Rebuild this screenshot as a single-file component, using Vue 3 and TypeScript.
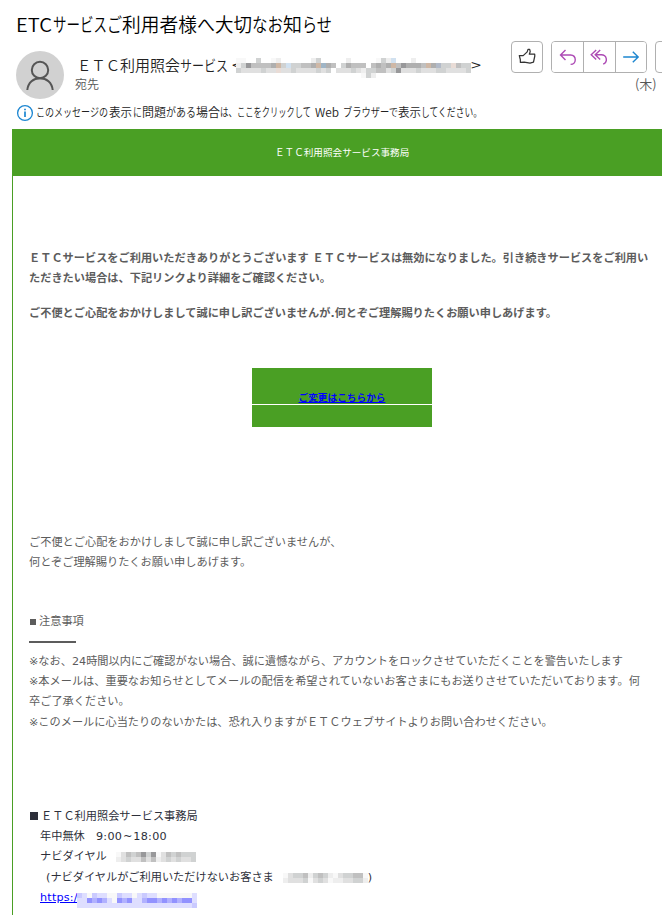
<script setup lang="ts">
import { defineComponent, h } from 'vue'

interface Segment {
  x: number
  w: number
  t: string
}

const title: Segment[] = [
  { x: 16, w: 36, t: 'ETC' },
  { x: 53, w: 54, t: 'サービス' },
  { x: 107, w: 15, t: 'ご' },
  { x: 122, w: 75, t: '利用者様' },
  { x: 197, w: 18, t: 'へ' },
  { x: 215, w: 37, t: '大切' },
  { x: 252, w: 31, t: 'なお' },
  { x: 283, w: 19, t: '知' },
  { x: 302, w: 30, t: 'らせ' },
]

const sender: Segment[] = [
  { x: 0, w: 43, t: 'ＥＴＣ' },
  { x: 43, w: 60, t: '利用照会' },
  { x: 103, w: 48, t: 'サービス' },
  { x: 155, w: 10, t: '<' },
  { x: 394, w: 10, t: '>' },
]

const notice: Segment[] = [
  { x: 0, w: 72, t: 'このメッセージの' },
  { x: 73, w: 23, t: '表示' },
  { x: 97, w: 9, t: 'に' },
  { x: 106, w: 24, t: '問題' },
  { x: 130, w: 30, t: 'がある' },
  { x: 160, w: 24, t: '場合' },
  { x: 184, w: 17, t: 'は、' },
  { x: 201, w: 74, t: 'ここをクリックして' },
  { x: 279, w: 24, t: 'Web' },
  { x: 307, w: 55, t: 'ブラウザーで' },
  { x: 362, w: 23, t: '表示' },
  { x: 385, w: 61, t: 'してください。' },
]

const palette: Record<string, string> = {
  a: '#f8f8f8', b: '#eeeeee', c: '#e0e0e0', d: '#d0d2d2', e: '#c0c0c0', f: '#afafaf',
  g: '#98989a', h: '#cfb8a6', i: '#d1e1f0', j: '#9fb5c6', k: '#e9dcd6', l: '#b2bac8',
  p: '#dedeff', q: '#cacaff', r: '#b1b1ff', s: '#9292ff',
}

const Mosaic = defineComponent({
  props: { rows: { type: Array as () => string[], required: true } },
  setup(props) {
    return () => {
      const cols = props.rows[0].length
      const height = props.rows.length
      return h(
        'svg',
        { width: cols * 5, height: height * 5, viewBox: `0 0 ${cols} ${height}`, 'shape-rendering': 'crispEdges' },
        props.rows.flatMap((row, y) =>
          [...row].map((c, x) =>
            palette[c] ? h('rect', { x, y, width: 1, height: 1, fill: palette[c] }) : null,
          ),
        ),
      )
    }
  },
})

const address = [
  'aa..d..ab......bd.....b.....adbi...b...........',
  'bdgeeeefhdiddeefhjfe.dfeee.efefhegfffehflddkedd',
  'dccccdcckccdccccdcd.cccdcbddeecdgcccdcccddccccd',
  '.........................adb...................',
]

const phone = ['acedegdgacededdd', 'bcdccecebcdcdccd']
const phoneAlt = ['acddebdedbacddeea', 'bcccdacdcabbccddb']
const url = ['qpaqppaaqppapqppaaaaaaap', 'ppsrsrpasrspprssrsrsrssp', 'pppppppppppppppppppppppq']
</script>

<template>
  <main class="mail">
    <svg class="title" width="350" height="41">
      <text v-for="s in title" :key="s.x" :x="s.x" y="32" :textLength="s.w" lengthAdjust="spacingAndGlyphs">{{ s.t }}</text>
    </svg>

    <header class="head">
      <svg class="avatar" width="48" height="48" viewBox="0 0 48 48">
        <circle cx="24" cy="24" r="24" fill="#d1d1d1" />
        <g fill="none" stroke="#555" stroke-width="2">
          <circle cx="24" cy="19" r="8.2" />
          <path d="M11.3 39C12.2 31.5 17.4 27.3 24 27.3S35.8 31.5 36.7 39" />
        </g>
      </svg>
      <div class="who">
        <div class="from">
          <svg width="408" height="24">
            <text v-for="s in sender" :key="s.x" :x="s.x" y="20" :textLength="s.w" lengthAdjust="spacingAndGlyphs">{{ s.t }}</text>
          </svg>
          <Mosaic class="address" :rows="address" />
        </div>
        <div class="to">宛先</div>
      </div>
      <div class="side">
        <div class="actions">
          <button class="box">
            <svg width="20" height="20" viewBox="0 0 20 20" fill="none" stroke="#333" stroke-width="1.25" stroke-linejoin="round">
              <path d="M2.3 8.6H6.2L10.2 4.9L11 2.4L12.7 2.3L13.2 4.6L12.3 7.2H17.7L17.8 9L16.5 15.2L13 16.1L7.2 15.2L3.4 15.4L3.3 12.5Z" />
            </svg>
          </button>
          <div class="group">
            <button>
              <svg width="20" height="20" viewBox="0 0 20 20" fill="none" stroke="#ad4bb5" stroke-width="1.4">
                <path d="M7.5 3L2.5 8L7.5 13M2.5 8H12.6C18.8 8.3 18.8 17.4 12.6 17.4" />
              </svg>
            </button>
            <button>
              <svg width="20" height="20" viewBox="0 0 20 20" fill="none" stroke="#ad4bb5" stroke-width="1.4">
                <path d="M7.2 3L2.2 7.8L7.2 12.6M11.2 3L6.2 7.8L11.2 12.6M6.2 7.8H12.2C18 8 19.2 14.5 14.2 17.2" />
              </svg>
            </button>
            <button>
              <svg width="20" height="20" viewBox="0 0 20 20" fill="none" stroke="#1d86d0" stroke-width="1.4">
                <path d="M2.2 10H17M11.8 4.7L17.2 10L11.8 15.3" />
              </svg>
            </button>
          </div>
          <button class="box"></button>
        </div>
        <div class="day">(木)</div>
      </div>
    </header>

    <div class="notice">
      <svg width="18" height="18" viewBox="0 0 18 18">
        <circle cx="9" cy="9" r="7.4" fill="none" stroke="#1c86d1" stroke-width="1.3" />
        <path d="M9 7.6V13M9 4.7V6.3" stroke="#1c86d1" stroke-width="1.7" />
      </svg>
      <svg class="noticetext" width="600" height="22">
        <text v-for="s in notice" :key="s.x" :x="s.x" y="16" :textLength="s.w" lengthAdjust="spacingAndGlyphs">{{ s.t }}</text>
      </svg>
    </div>

    <article class="body">
      <div class="banner">ＥＴＣ利用照会サービス事務局</div>
      <section class="intro">
        <p>ＥＴＣサービスをご利用いただきありがとうございます ＥＴＣサービスは無効になりました。引き続きサービスをご利用い<br />ただきたい場合は、下記リンクより詳細をご確認ください。</p>
        <p>ご不便とご心配をおかけしまして誠に申し訳ございませんが.何とぞご理解賜りたくお願い申しあげます。</p>
      </section>
      <div class="cta">
        <div class="upper"><a>ご変更はこちらから</a></div>
        <div class="lower"></div>
      </div>
      <section class="apology">ご不便とご心配をおかけしまして誠に申し訳ございませんが、<br />何とぞご理解賜りたくお願い申しあげます。</section>
      <section class="caution">
        <div><span class="sq"></span>注意事項</div>
        <div class="dash"><i v-for="n in 7" :key="n"></i></div>
        <div>※なお、24時間以内にご確認がない場合、誠に遺憾ながら、アカウントをロックさせていただくことを警告いたします</div>
        <div>※本メールは、重要なお知らせとしてメールの配信を希望されていないお客さまにもお送りさせていただいております。何</div>
        <div>卒ご了承ください。</div>
        <div>※このメールに心当たりのないかたは、恐れ入りますがＥＴＣウェブサイトよりお問い合わせください。</div>
      </section>
      <footer class="contact">
        <div><span class="sq big"></span>ＥＴＣ利用照会サービス事務局</div>
        <div class="in">年中無休　<span class="hours">9:00<span class="tilde">~</span>18:00</span></div>
        <div class="in row">ナビダイヤル<Mosaic class="m1" :rows="phone" /></div>
        <div class="in row"><span class="paren">(</span>ナビダイヤルがご利用いただけないお客さま<Mosaic class="m2" :rows="phoneAlt" />)</div>
        <div class="in row"><a class="link">https:/</a><Mosaic class="m3" :rows="url" /></div>
      </footer>
    </article>
  </main>
</template>

<style>
body {
  margin: 0;
  background: #fff;
  overflow: hidden;
}
</style>

<style scoped>
.mail {
  width: 662px;
  height: 915px;
  overflow: hidden;
  font-family: "Noto Sans CJK JP", sans-serif;
  color: #333;
}
svg {
  display: block;
  flex: none;
}
.title {
  font-size: 19px;
  font-weight: 350;
  fill: #000;
}
.head {
  display: flex;
  height: 60px;
}
.avatar {
  margin: 10px 0 0 16px;
}
.who {
  margin: 10px 0 0 11px;
  width: 408px;
  flex: none;
}
.from {
  position: relative;
  height: 24px;
  margin-left: 2px;
  font-size: 15px;
  font-weight: 350;
  fill: #222;
}
.address {
  position: absolute;
  left: 159px;
  top: 7px;
}
.to {
  font-size: 12px;
  line-height: 18px;
  color: #555;
  font-weight: 350;
}
.side {
  width: 200px;
  margin-left: 28px;
  flex: none;
}
.actions {
  display: flex;
  gap: 8px;
  height: 32px;
}
button {
  box-sizing: border-box;
  width: 32px;
  height: 32px;
  padding: 0;
  border: 0;
  background: #fff;
  display: flex;
  align-items: center;
  justify-content: center;
}
.box {
  border: 1px solid #b0b0b0;
  border-radius: 4px;
}
.group {
  display: flex;
  box-sizing: border-box;
  width: 96px;
  border: 1px solid #b0b0b0;
  border-radius: 4px;
  overflow: hidden;
}
.group button {
  height: 30px;
}
.group button + button {
  border-left: 1px solid #b0b0b0;
}
.day {
  margin-left: 124px;
  font-size: 13px;
  line-height: 21px;
  font-weight: 350;
  color: #555;
}
.notice {
  display: flex;
  height: 28px;
  padding-left: 16px;
}
.notice > svg:first-child {
  margin-top: 3px;
}
.noticetext {
  margin-left: 2px;
  font-size: 12px;
  fill: #222;
  font-weight: 350;
}
.body {
  margin-left: 12px;
  border-left: 1px solid #4a9f24;
  height: 786px;
  padding-left: 16px;
  font-family: "DejaVu Sans", "Noto Sans CJK JP", sans-serif;
  font-size: 11.2px;
  line-height: 20.25px;
  color: #5c5c5c;
  white-space: nowrap;
}
.banner {
  height: 47px;
  line-height: 47px;
  margin-left: -16px;
  padding-left: 262px;
  background: #4a9f24;
  color: #fff;
  font-size: 9.6px;
}
.intro {
  padding-top: 73px;
  height: 119px;
  font-weight: 700;
}
.intro p {
  margin: 0 0 14.5px;
}
.cta {
  width: 180px;
  margin-left: 223px;
}
.upper {
  height: 36px;
  background: #4a9f24;
  text-align: center;
  font-size: 9.67px;
  font-weight: 700;
  line-height: 59px;
  margin-bottom: 1px;
}
.lower {
  height: 22px;
  background: #4a9f24;
}
a {
  color: #00f;
  text-decoration: underline;
}
.apology {
  padding-top: 106px;
}
.caution {
  padding-top: 38px;
}
.sq {
  display: inline-block;
  width: 6px;
  height: 6px;
  margin: 0 3px 0 1px;
  background: #5c5c5c;
}
.sq.big {
  width: 8px;
  height: 8px;
  background: #2d2f3a;
}
.dash {
  display: flex;
  align-items: center;
  height: 20px;
}
.dash i {
  width: 6.7px;
  height: 2px;
  background: #5c5c5c;
}
.contact {
  padding-top: 74px;
  color: #2d2f3a;
}
.in {
  padding-left: 11px;
}
.row {
  display: flex;
  align-items: center;
  height: 20.25px;
}
.hours {
  letter-spacing: 0.3px;
}
.tilde {
  display: inline-block;
  width: 11px;
  text-align: center;
}
.paren {
  margin-left: 6px;
}
.m1 {
  margin-left: 9px;
}
.m2 {
  margin-left: 9px;
}
.link {
  width: 37px;
  letter-spacing: 0.2px;
}
.m3 {
  margin-top: 5px;
}
</style>
